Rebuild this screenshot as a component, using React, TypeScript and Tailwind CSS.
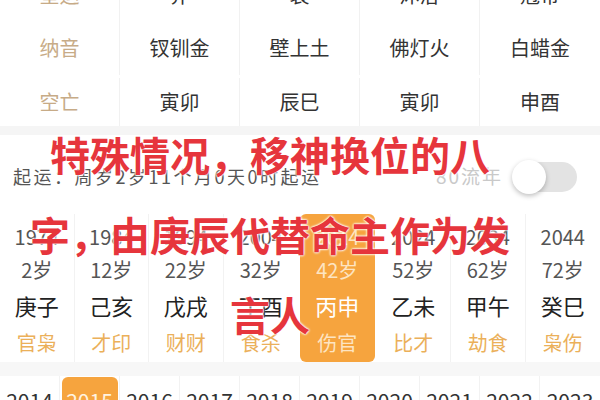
const topRows = [
  { label: "星运", values: ["养", "衰", "沐浴", "冠带"], h: "h-[51px]" },
  { label: "纳音", values: ["钗钏金", "壁上土", "佛灯火", "白蜡金"], h: "h-[55px]" },
  { label: "空亡", values: ["寅卯", "辰巳", "寅卯", "申酉"], h: "h-[51px] pt-[3px]" },
];

const dayun = [
  { year: "1974", age: "2岁", gz: "庚子", ss: "官枭" },
  { year: "1984", age: "12岁", gz: "己亥", ss: "才印" },
  { year: "1994", age: "22岁", gz: "戊戌", ss: "财财" },
  { year: "2004", age: "32岁", gz: "丁酉", ss: "食杀" },
  { year: "2014", age: "42岁", gz: "丙申", ss: "伤官", active: true },
  { year: "2024", age: "52岁", gz: "乙未", ss: "比才" },
  { year: "2034", age: "62岁", gz: "甲午", ss: "劫食" },
  { year: "2044", age: "72岁", gz: "癸巳", ss: "枭伤" },
];

const years = ["2014", "2015", "2016", "2017", "2018", "2019", "2020", "2021", "2022", "2023"];

export default function App() {
  return (
    <div
      className="relative w-[600px] h-[400px] overflow-hidden bg-white"
      style={{ fontFamily: '"Noto Sans CJK SC", "Noto Sans", sans-serif' }}
    >
      {/* pillar table */}
      <div className="-mt-[31px]">
        {topRows.map((row) => (
          <div key={row.label} className={`flex ${row.h}`}>
            <div className="w-[120px] flex items-center justify-center text-[20px] text-[#c7ab87] border-r border-[#f1f1f1]">
              {row.label}
            </div>
            {row.values.map((v, i) => (
              <div
                key={i}
                className={`w-[120px] flex items-center justify-center text-[20px] text-[#333333] ${
                  i < 3 ? "border-r border-[#f1f1f1]" : ""
                }`}
              >
                {v}
              </div>
            ))}
          </div>
        ))}
      </div>

      <div className="h-[9px] bg-[#f5f5f5]" />

      {/* start of luck */}
      <div className="h-[79px] flex items-center justify-between pl-[13px] pr-[23px] pt-[4px]">
        <span className="text-[18px] tracking-[2.5px] text-[#555555]">起运：周岁2岁11个月0天0时起运</span>
        <div className="flex items-center gap-[10px]">
          <span className="text-[19px] tracking-[2px] text-[#c9c9c9]">80流年</span>
          <div className="relative w-[64px] h-[30px] rounded-full bg-[#e3e3e3]">
            <div className="absolute -left-[1px] -top-[2px] w-[34px] h-[34px] rounded-full bg-white shadow-[0_2px_5px_rgba(0,0,0,0.25)]" />
          </div>
        </div>
      </div>

      {/* big luck columns */}
      <div className="flex h-[148px]">
        {dayun.map((d, i) => (
          <div
            key={d.year}
            className={`w-[75px] flex flex-col items-center pt-[6px] ${
              d.active ? "bg-[#f6a43e] rounded-md mx-[2px] w-[71px]" : ""
            } ${i < 7 && !d.active && !dayun[i + 1]?.active ? "border-r border-[#f2f2f2]" : ""}`}
          >
            <div className={`h-[34px] flex items-center text-[20px] ${d.active ? "text-[#fde4c2]" : "text-[#555555]"}`}>
              {d.year}
            </div>
            <div className={`h-[32px] flex items-center text-[20px] ${d.active ? "text-[#fde4c2]" : "text-[#555555]"}`}>
              {d.age}
            </div>
            <div className={`h-[38px] flex items-center text-[22px] ${d.active ? "text-white" : "text-[#222222]"}`}>
              {d.gz}
            </div>
            <div className={`h-[38px] flex items-center text-[20px] ${d.active ? "text-[#fde4c2]" : "text-[#ebb05a]"}`}>
              {d.ss}
            </div>
          </div>
        ))}
      </div>

      <div className="h-[14px] bg-[#f7f7f7]" />

      {/* flowing years */}
      <div className="flex">
        {years.map((y, i) => (
          <div
            key={y}
            className={`w-[60px] flex justify-center ${i < 9 ? "border-r border-[#f2f2f2]" : ""}`}
          >
            <div
              className={`w-[56px] mt-[1px] pt-[8px] h-[40px] rounded-t-md text-center text-[21px] leading-[30px] ${
                y === "2015" ? "bg-[#f6a43e] text-[#fff3e0]" : "text-[#333333]"
              }`}
            >
              {y}
            </div>
          </div>
        ))}
      </div>

      {/* overlay caption */}
      <div
        className="absolute left-[20px] top-[114px] w-[500px] text-center text-[40px] leading-[80px] font-bold text-[#e6353c] [text-shadow:0_0_2px_#fff,0_0_2px_#fff,0_0_3px_#fff]"
      >
        <div>特殊情况，移神换位的八</div>
        <div>字，由庚辰代替命主作为发</div>
        <div>言人</div>
      </div>
    </div>
  );
}
